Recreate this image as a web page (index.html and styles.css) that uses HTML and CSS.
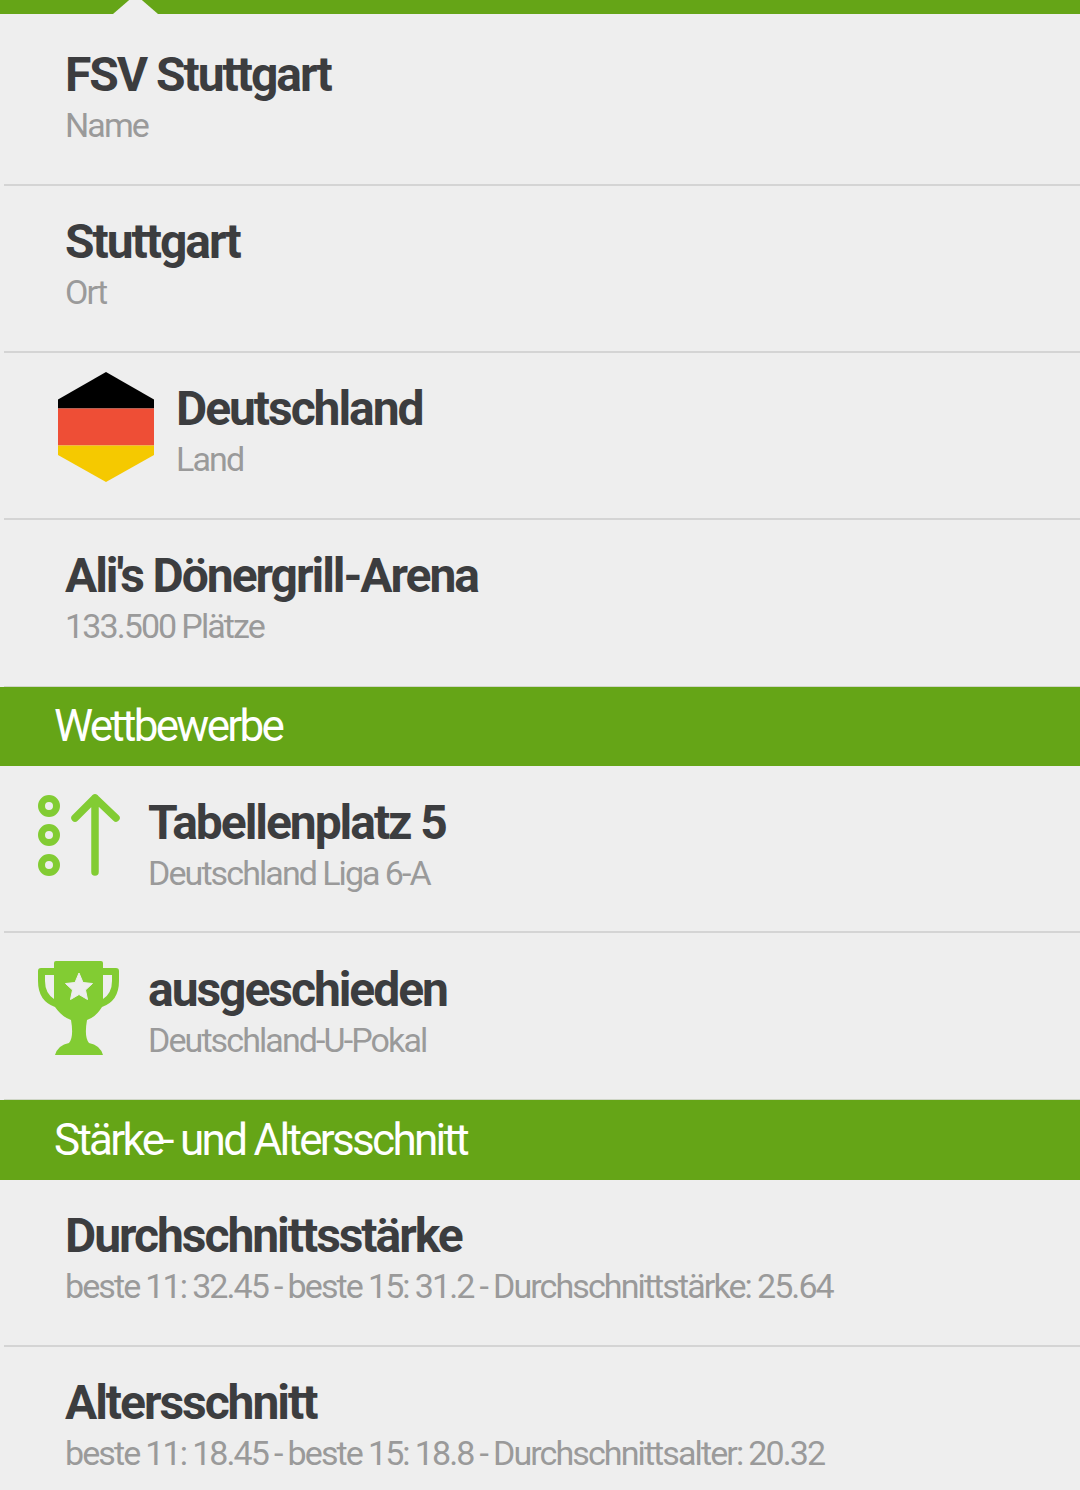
FILE: index.html
```html
<!DOCTYPE html>
<html lang="de">
<head>
<meta charset="utf-8">
<title>FSV Stuttgart</title>
<link rel="stylesheet" href="styles.css">
</head>
<body>
<div class="topbar"><span class="notch"></span></div>
<div class="list">
  <div class="row first"><div class="text indent"><div class="title">FSV Stuttgart</div><div class="sub">Name</div></div></div>
  <div class="row"><div class="text indent"><div class="title">Stuttgart</div><div class="sub">Ort</div></div></div>
  <div class="row">
    <svg class="flag" width="96" height="110" viewBox="0 0 96 110"><path d="M48 0L96 27.500V36.500H0V27.500Z" fill="#000"/><rect y="36.500" width="96" height="37" fill="#ee4e36"/><path d="M0 73.500H96V83L48 110L0 83Z" fill="#f5c900"/></svg>
    <div class="text"><div class="title">Deutschland</div><div class="sub">Land</div></div>
  </div>
  <div class="row last"><div class="text indent"><div class="title">Ali's Dönergrill-Arena</div><div class="sub">133.500 Plätze</div></div></div>
</div>
<div class="band">Wettbewerbe</div>
<div class="list">
  <div class="row">
    <svg class="ico" width="84" height="84" viewBox="0 0 84 84" fill="none" stroke="#82cc33"><circle cx="11" cy="13" r="7.500" stroke-width="7"/><circle cx="11" cy="42" r="7.500" stroke-width="7"/><circle cx="11" cy="72" r="7.500" stroke-width="7"/><path d="M57 79V5M37 25L57 5L78 25" stroke-width="7.500" stroke-linecap="round" stroke-linejoin="round"/></svg>
    <div class="text shifted"><div class="title">Tabellenplatz 5</div><div class="sub">Deutschland Liga 6-A</div></div>
  </div>
  <div class="row last">
    <svg class="ico trophy" width="84" height="96" viewBox="0 0 84 96"><path d="M0 10Q0 7 3 7H16V2Q16 0 18 0H63Q65 0 65 2V7H78Q81 7 81 10V20Q81 40 64 46Q58 56 49 59Q46 76 51 82Q62 84 65 94H17Q20 84 31 82Q36 76 33 59Q24 56 17 46Q0 40 0 20ZM7 14V20Q7 32 16 38V14ZM74 14H65V38Q74 32 74 20Z" fill="#82cc33" fill-rule="evenodd"/><path d="M41 12L45 21.500L54.500 22.500L47.500 29L49.500 38.500L41 33.500L32.500 38.500L34.500 29L27.500 22.500L37 21.500Z" fill="#eee" stroke="#eee" stroke-linejoin="round"/></svg>
    <div class="text shifted"><div class="title">ausgeschieden</div><div class="sub">Deutschland-U-Pokal</div></div>
  </div>
</div>
<div class="band tall">Stärke- und Altersschnitt</div>
<div class="list">
  <div class="row"><div class="text indent"><div class="title">Durchschnittsstärke</div><div class="sub">beste 11: 32.45 - beste 15: 31.2 - Durchschnittstärke: 25.64</div></div></div>
  <div class="row open"><div class="text indent"><div class="title">Altersschnitt</div><div class="sub">beste 11: 18.45 - beste 15: 18.8 - Durchschnittsalter: 20.32</div></div></div>
</div>
</body>
</html>
```

FILE: styles.css
```css
html, body {
  margin: 0;
  padding: 0;
}
body {
  width: 1080px;
  height: 1490px;
  overflow: hidden;
  background: #eee;
  font-family: Roboto, sans-serif;
}
.topbar {
  height: 14px;
  background: #65a517;
  position: relative;
  overflow: hidden;
}
.notch {
  position: absolute;
  left: 113px;
  top: -1px;
  width: 45px;
  height: 15px;
  background: #eee;
  clip-path: polygon(50% -30%, 100% 100%, 0 100%);
}
.row {
  height: 167px;
  box-sizing: border-box;
  display: flex;
  align-items: flex-start;
  border-bottom: 2px solid #d4d4d4;
  margin-left: 4px;
  padding: 28px 0 0 53px;
}
.row.first {
  height: 172px;
  padding-top: 33px;
}
.row.last {
  border-bottom: 1px solid #cfd6c6;
}
.row.open {
  border-bottom: 0;
}
.flag {
  flex: none;
  margin: -9px 22px 0 1px;
}
.ico {
  flex: none;
  margin-top: -1px;
  margin-left: -19px;
  margin-right: 26px;
}
.trophy {
  margin-top: 0;
}
.text.indent {
  margin-left: 8px;
}
.text.shifted {
  margin-top: 1px;
}
.title {
  font-size: 48px;
  line-height: 56px;
  font-weight: 700;
  color: #3c3d3f;
  letter-spacing: -2.05px;
  white-space: nowrap;
}
.sub {
  font-size: 34px;
  line-height: 45px;
  font-weight: 400;
  color: #9a9a9a;
  letter-spacing: -1.9px;
  word-spacing: -0.5px;
  white-space: nowrap;
}
.band {
  height: 79px;
  line-height: 79px;
  box-sizing: border-box;
  padding-left: 54px;
  background: #65a517;
  color: #fff;
  font-size: 44px;
  font-weight: 400;
  letter-spacing: -2.7px;
  white-space: nowrap;
}
.band.tall {
  height: 80px;
  line-height: 80px;
}
```
